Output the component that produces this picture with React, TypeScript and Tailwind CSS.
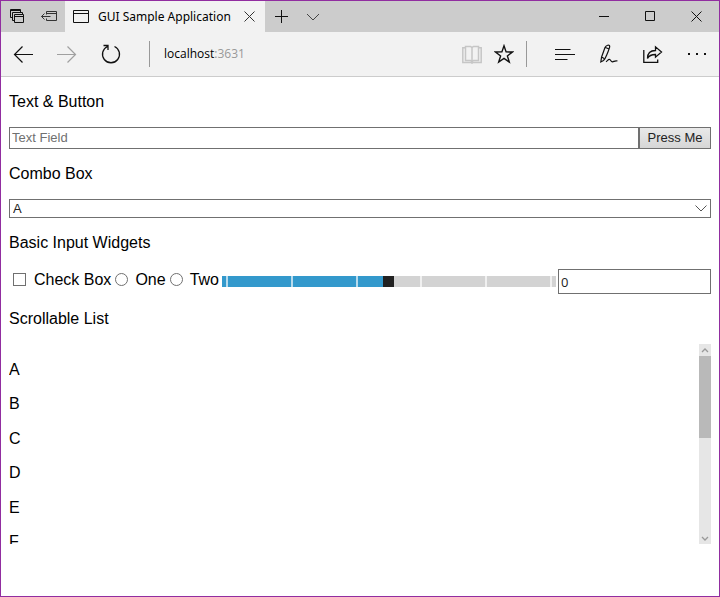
import { useRef, useState } from "react";
import type { ReactNode } from "react";

const letters = ["A", "B", "C", "D", "E", "F", "G", "H", "I", "J", "K", "L"];

function Icon({ width, height, stroke = "#111111", children }: { width: number; height: number; stroke?: string; children: ReactNode }) {
  return (
    <svg width={width} height={height} viewBox={`0 0 ${width} ${height}`} fill="none" stroke={stroke} strokeWidth="1" aria-hidden="true">
      {children}
    </svg>
  );
}

function ChromeButton({ label, size, children }: { label: string; size: string; children: ReactNode }) {
  return (
    <button type="button" aria-label={label} className={`flex h-full shrink-0 items-center justify-center ${size}`}>
      {children}
    </button>
  );
}

function TabBar() {
  return (
    <div className="flex h-[31px] bg-[#cccccc]">
      <ChromeButton label="Tabs set aside" size="w-8">
        <Icon width={14} height={15}>
          <path d="M2.500 8.500h-2v-8h10v3M.5 1.500h10M4.500 11.500h-2v-8h10v2M4.500 5.500h9v8h-9zM4.500 7.500h9" />
        </Icon>
      </ChromeButton>
      <ChromeButton label="Set tabs aside" size="w-8">
        <Icon width={16} height={11} stroke="#333333">
          <path d="M5.500 3.500v-3h10v9h-10v-2M5.500 2.500h10M.5 5.500h9M3.500 2.500l-3 3 3 3" />
        </Icon>
      </ChromeButton>
      <div className="flex w-[200px] items-center bg-[#f2f2f2] pl-2">
        <Icon width={16} height={14}>
          <path d="M.5 .5h15v12h-15zM.5 3.500h15" />
        </Icon>
        <span className="ml-[9px] grow whitespace-nowrap font-['Noto_Sans',sans-serif] text-[12px] leading-4">GUI Sample Application</span>
        <ChromeButton label="Close tab" size="w-8">
          <Icon width={11} height={11} stroke="#333333">
            <path d="M.5 .5l10 10M10.500 .5l-10 10" />
          </Icon>
        </ChromeButton>
      </div>
      <ChromeButton label="New tab" size="w-8">
        <Icon width={13} height={13}>
          <path d="M6.500 0v13M0 6.500h13" />
        </Icon>
      </ChromeButton>
      <ChromeButton label="Show tab previews" size="w-8">
        <Icon width={14} height={8} stroke="#444444">
          <path d="M1 1l6 6 6-6" />
        </Icon>
      </ChromeButton>
      <div className="grow" />
      <ChromeButton label="Minimize" size="w-[46px]">
        <Icon width={10} height={11}>
          <path d="M0 5.500h10" />
        </Icon>
      </ChromeButton>
      <ChromeButton label="Maximize" size="w-[46px]">
        <Icon width={10} height={11}>
          <path d="M.5 .5h9v9h-9z" />
        </Icon>
      </ChromeButton>
      <ChromeButton label="Close" size="w-[46px]">
        <Icon width={11} height={11}>
          <path d="M.5 .5l10 10M10.500 .5l-10 10" />
        </Icon>
      </ChromeButton>
    </div>
  );
}

function Toolbar() {
  return (
    <div className="flex h-[45px] items-center border-b border-[#cccccc] bg-[#f2f2f2]">
      <ChromeButton label="Back" size="w-11">
        <Icon width={20} height={18}>
          <path d="M20 9.500H1.500M9.500 1.500l-8 8 8 8" strokeWidth="1.200" />
        </Icon>
      </ChromeButton>
      <ChromeButton label="Forward" size="w-11">
        <Icon width={20} height={18} stroke="#a0a0a0">
          <path d="M0 9.500h18.500M10.500 1.500l8 8-8 8" strokeWidth="1.200" />
        </Icon>
      </ChromeButton>
      <ChromeButton label="Refresh" size="w-11">
        <Icon width={20} height={20}>
          <path d="M13.500 2.500A8.500 8.500 0 1 1 6.500 2.500M2.500 1.500h4.500v4.500" strokeWidth="1.300" />
        </Icon>
      </ChromeButton>
      <div className="ml-4 h-[26px] w-px bg-[#999999]" />
      <button type="button" aria-label="Address" className="grow pl-[14px] text-left text-[12px] leading-4">
        localhost<span className="text-[#999999]">:3631</span>
      </button>
      <ChromeButton label="Reading view" size="w-8">
        <Icon width={20} height={19} stroke="#c6c6c6">
          <path d="M10 2v14M3.500 1.500h5L10 2.500l1.500-1h5v14h-5L10 16.500l-1.500-1h-5zM3.500 2.800H.8v14.700h8.200l1 .7 1-.7h8.200V2.800h-2.700" strokeWidth="1.500" />
        </Icon>
      </ChromeButton>
      <ChromeButton label="Add to favorites" size="w-8">
        <Icon width={20} height={20}>
          <path d="M10 1.800l2.100 6.100 6.400.1-5.100 3.900 1.900 6.200-5.300-3.700-5.300 3.700 1.900-6.200L1.500 8l6.400-.1z" strokeWidth="1.400" />
        </Icon>
      </ChromeButton>
      <div className="mr-4 ml-[6px] h-[26px] w-px bg-[#999999]" />
      <ChromeButton label="Hub" size="w-11">
        <Icon width={20} height={13}>
          <path d="M0 1.500h15.500M0 6.500h20M0 11.500h12.500" strokeWidth="1.200" />
        </Icon>
      </ChromeButton>
      <ChromeButton label="Make a web note" size="w-11">
        <Icon width={18} height={20}>
          <path d="M.8 18l.8-5L5 3.500C6 1 9.500.3 9.700 2.300c.1 1.500-1.700 5.700-3 8.700-1 2.500-2 4.500-3.200 5.500zM5.500 3.500l3 1.300M1.600 13l2.500 1.500M6 17.700c1.500-1 2.500-2.700 3.700-2.200 1.300.6 1.300 2.500 2.800 2.300 1.500-.2 2.500-1.600 5-.8" strokeWidth="1.200" />
        </Icon>
      </ChromeButton>
      <ChromeButton label="Share" size="w-11">
        <Icon width={20} height={19}>
          <path d="M.8 5v12.300h13.900V14.500M4.500 13.500C4.500 8 8 5.500 12.500 5.500V1.800l6 5.200-6 5.200V9.500c-4 0-6.500 1-8 4z" strokeWidth="1.300" />
        </Icon>
      </ChromeButton>
      <ChromeButton label="More" size="w-11">
        <Icon width={18} height={4} stroke="none">
          <path d="M0 1h2v2H0zM8 1h2v2H8zM16 1h2v2h-2z" fill="#111111" />
        </Icon>
      </ChromeButton>
    </div>
  );
}

function StepSlider() {
  const [value, setValue] = useState(50);
  const fill = `linear-gradient(to right, #3399cc ${value}%, #d3d3d3 ${value}%)`;
  return (
    <div className="relative flex h-[11px] min-w-0 grow">
      <input
        type="range"
        aria-label="Level"
        min={0}
        max={100}
        value={value}
        onChange={(e) => setValue(Number(e.target.value))}
        style={{ background: fill }}
        className="h-[11px] w-full min-w-0 appearance-none [&::-webkit-slider-thumb]:h-[11px] [&::-webkit-slider-thumb]:w-[11px] [&::-webkit-slider-thumb]:appearance-none [&::-webkit-slider-thumb]:bg-[#222222]"
      />
      <div className="pointer-events-none absolute inset-0 flex justify-between px-1" aria-hidden="true">
        {[0, 1, 2, 3, 4, 5].map((tick) => (
          <span key={tick} className="w-0.5 bg-white/65" />
        ))}
      </div>
    </div>
  );
}

function ScrollableList() {
  const list = useRef<HTMLDivElement>(null);
  const [progress, setProgress] = useState(0);
  const onScroll = () => {
    const el = list.current;
    if (el) setProgress(el.scrollTop / Math.max(1, el.scrollHeight - el.clientHeight));
  };
  const step = (amount: number) => list.current?.scrollBy({ top: amount });
  return (
    <div className="flex h-[200px]">
      <div ref={list} onScroll={onScroll} className="grow overflow-y-auto pt-4 [scrollbar-width:none]">
        <ul className="grid h-[413px] auto-rows-fr">
          {letters.map((letter) => (
            <li key={letter}>{letter}</li>
          ))}
        </ul>
      </div>
      <div className="flex w-3 flex-col bg-[#e6e6e6]">
        <button type="button" aria-label="Scroll up" onClick={() => step(-34)} className="flex h-3 items-center justify-center">
          <Icon width={8} height={5} stroke="#999999">
            <path d="M1 4l3-3 3 3" strokeWidth="1.300" />
          </Icon>
        </button>
        <div className="flex grow flex-col">
          <div style={{ flexGrow: progress }} />
          <div className="h-[82px] bg-[#b9b9b9]" />
          <div style={{ flexGrow: 1 - progress }} />
        </div>
        <button type="button" aria-label="Scroll down" onClick={() => step(34)} className="flex h-3 items-center justify-center">
          <Icon width={8} height={5} stroke="#999999">
            <path d="M1 1l3 3 3-3" strokeWidth="1.300" />
          </Icon>
        </button>
      </div>
    </div>
  );
}

export default function App() {
  return (
    <div className="flex min-h-screen flex-col border border-[#912da0] bg-white text-black">
      <header className="font-['Open_Sans','Noto_Sans',sans-serif]">
        <TabBar />
        <Toolbar />
      </header>
      <main className="flex flex-col gap-[15px] px-2 py-[15px] font-['Liberation_Sans',Arial,sans-serif] text-[16px] leading-5">
        <h2>Text &amp; Button</h2>
        <div className="flex h-[22px]">
          <input type="text" aria-label="Text Field" placeholder="Text Field" className="min-w-0 grow border border-[#707070] px-0.5 text-[13px] placeholder:text-[#707070]" />
          <button type="button" className="w-[72px] border border-[#707070] bg-linear-to-b from-[#e9e9e9] to-[#d6d6d6] text-[13px] leading-4 text-[#222222]">
            Press Me
          </button>
        </div>
        <h2>Combo Box</h2>
        <div className="relative flex h-[19px]">
          <select aria-label="Combo Box" defaultValue="A" className="w-full appearance-none border border-[#707070] bg-white pl-[3px] text-[13px] leading-4 text-[#222222]">
            <option>A</option>
            <option>B</option>
            <option>C</option>
          </select>
          <div className="pointer-events-none absolute inset-y-0 right-1 flex items-center">
            <Icon width={12} height={7} stroke="#555555">
              <path d="M.5 .5L6 6l5.500-5.500" />
            </Icon>
          </div>
        </div>
        <h2>Basic Input Widgets</h2>
        <div className="flex h-[26px] items-center pt-px">
          <label className="flex items-center gap-2 pb-1 pl-1 whitespace-nowrap">
            <input type="checkbox" className="size-[13px] appearance-none border border-[#707070] checked:bg-[#3399cc]" />
            Check Box
          </label>
          <label className="flex items-center gap-[7px] pb-1 pl-1 whitespace-nowrap">
            <input type="radio" name="choice" className="size-[13px] appearance-none rounded-full border border-[#707070] checked:bg-[#3399cc]" />
            One
          </label>
          <label className="mr-[3px] flex items-center gap-[7px] pb-1 pl-1 whitespace-nowrap">
            <input type="radio" name="choice" className="size-[13px] appearance-none rounded-full border border-[#707070] checked:bg-[#3399cc]" />
            Two
          </label>
          <StepSlider />
          <input type="number" aria-label="Number" defaultValue={0} className="ml-0.5 h-full w-[153px] shrink-0 appearance-none border border-[#707070] px-0.5 font-['Open_Sans','Noto_Sans',sans-serif] text-[13px] text-[#222222]" />
        </div>
        <h2>Scrollable List</h2>
        <ScrollableList />
      </main>
    </div>
  );
}
